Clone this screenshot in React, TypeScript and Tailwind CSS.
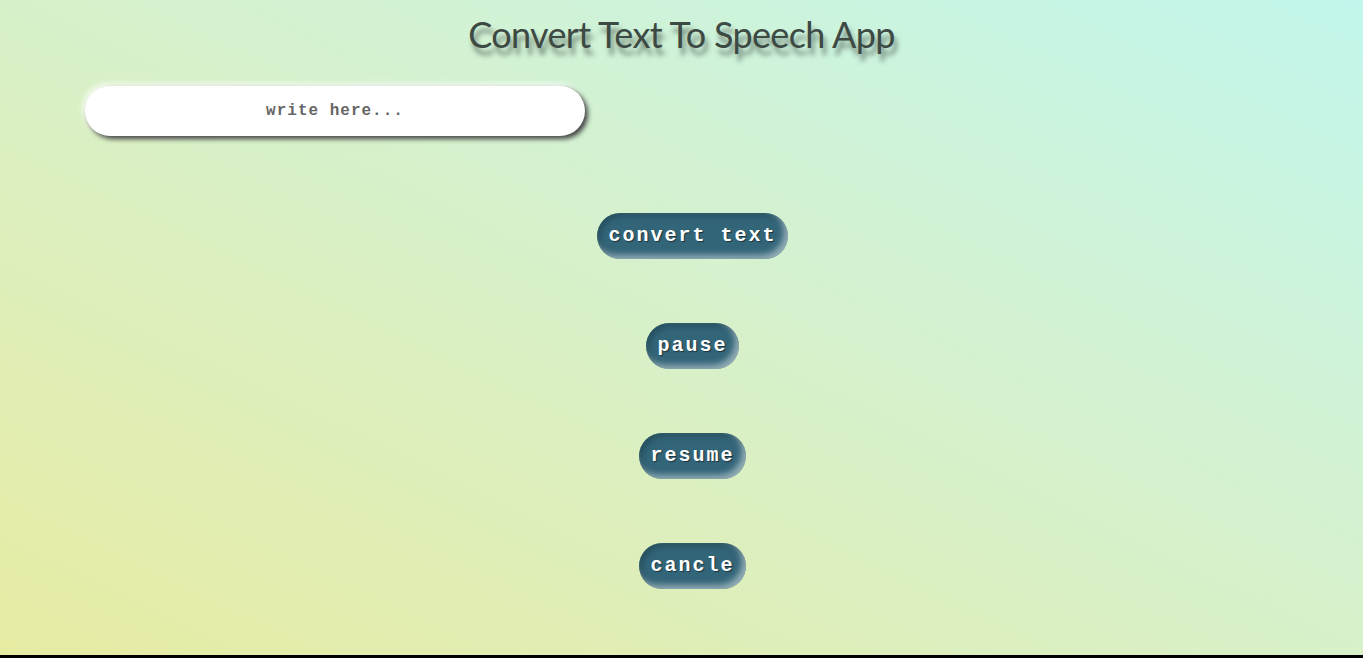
export default function App() {
  const buttons = ["convert text", "pause", "resume", "cancle"];

  return (
    <div className="bg-black h-screen overflow-hidden">
      <main className="h-[655px] bg-[linear-gradient(to_top_right,#e7eba2,#d6f1cd_55%,#c2f6ec)]">
        <h1
          className="pt-[12px] text-center text-[36px] leading-[44px] text-[#3d4943] [text-shadow:3px_7px_5px_rgba(40,50,45,0.55)] tracking-[-0.65px]"
          style={{ fontFamily: '"Gill Sans", "Lato", "Open Sans", sans-serif' }}
        >
          Convert Text To Speech App
        </h1>

        <div className="pl-[85px] pt-[30px]">
          <input
            type="text"
            placeholder="write here..."
            className="block w-[500px] h-[50px] rounded-full bg-white text-center text-[16px] font-bold tracking-[1px] text-[#555] placeholder:text-[#666] outline-none shadow-[3px_3px_5px_#444,-2px_-2px_6px_rgba(255,255,255,0.9)]"
            style={{ fontFamily: '"Liberation Mono", "Courier New", monospace' }}
          />
        </div>

        <div className="flex flex-col items-center gap-[64px] pt-[77px] pl-[22px]">
          {buttons.map((label) => (
            <button
              key={label}
              className="h-[46px] px-[11.5px] rounded-full bg-[#336579] text-white text-[20px] font-bold tracking-[2px] [text-shadow:1px_1px_1px_rgba(0,0,0,0.5)] shadow-[inset_-4px_-4px_6px_rgba(215,225,225,0.6),inset_3px_3px_6px_rgba(20,50,60,0.45)]"
              style={{ fontFamily: '"Liberation Mono", "Courier New", monospace' }}
            >
              {label}
            </button>
          ))}
        </div>
      </main>
    </div>
  );
}
